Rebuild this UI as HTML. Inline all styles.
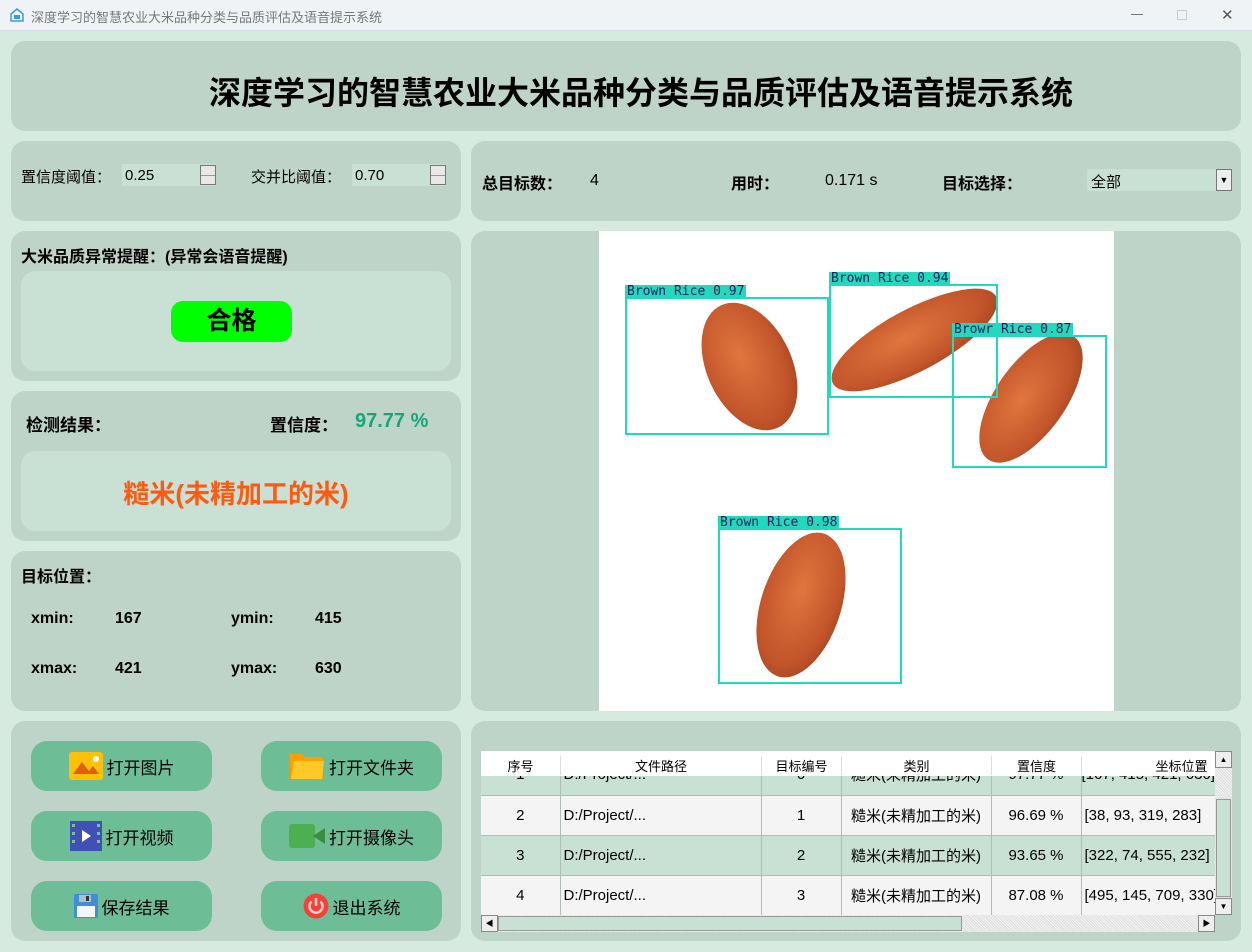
<!DOCTYPE html>
<html><head><meta charset="utf-8"><style>
*{box-sizing:border-box;margin:0;padding:0}
body{width:1252px;height:952px;background:#d6eadf;font-family:"Liberation Sans","Noto Sans CJK SC",sans-serif;position:relative;overflow:hidden;color:#000}
.a{position:absolute}
.p{position:absolute;background:#bfd4c8;border-radius:14px}
.in{position:absolute;background:#c9e0d4;border-radius:14px}
.b{font-weight:bold}
.btn{position:absolute;width:181px;height:50px;background:#6dbd96;border-radius:16px;display:flex;align-items:center;justify-content:center;font-size:17px;gap:4px}
.spin{position:absolute;background:#c9e0d4;height:22px;font-size:15px;padding:3px 0 0 3px}
.arr{position:absolute;right:0;top:1px;width:16px;height:20px;border:1px solid #777;background:#e8e8e8}
.arr:after{content:"";position:absolute;left:0;right:0;top:9px;border-top:1px solid #999}
table{border-collapse:collapse;font-size:15px}
td{border-right:1px solid #aac0b4;border-bottom:1px solid #aac0b4;height:40px;text-align:center;white-space:nowrap;overflow:hidden}
.box{position:absolute;border:2px solid #22d8bd}
.lab{position:absolute;background:#22d8bd;color:#1a2060;font-family:"DejaVu Sans Mono","Liberation Mono",monospace;font-size:13px;line-height:14px;padding:0 2px;white-space:nowrap}
.rice{position:absolute;background:radial-gradient(ellipse at 45% 40%,#e0763f,#c2552a 60%,#8e3518);border-radius:50%}
</style></head><body>
<div class="a" style="left:0;top:0;width:1252px;height:31px;background:#eff3f6;border-bottom:1px solid #dde"></div>
<svg class="a" style="left:9px;top:7px" width="16" height="16" viewBox="0 0 16 16"><path d="M2 7 L8 2 L14 7 V14 H2 Z" fill="none" stroke="#3a9be0" stroke-width="1.5"/><rect x="5" y="8" width="6" height="4" fill="#3a9be0"/></svg>
<div class="a" style="left:31px;top:7px;font-size:13px;color:#777">深度学习的智慧农业大米品种分类与品质评估及语音提示系统</div>
<div class="a" style="left:1131px;top:14px;width:12px;border-top:1px solid #777"></div>
<div class="a" style="left:1177px;top:10px;width:10px;height:10px;border:1px solid #ccc"></div>
<div class="a" style="left:1221px;top:6px;font-size:15px;color:#555">✕</div>

<div class="p" style="left:11px;top:41px;width:1230px;height:90px"></div>
<div class="a b" style="left:0;width:1282px;top:68px;text-align:center;font-size:32px">深度学习的智慧农业大米品种分类与品质评估及语音提示系统</div>

<div class="p" style="left:11px;top:141px;width:450px;height:80px"></div>
<div class="a" style="left:21px;top:166px;font-size:15px">置信度阈值：</div>
<div class="spin" style="left:122px;top:164px;width:94px">0.25<div class="arr"></div></div>
<div class="a" style="left:251px;top:166px;font-size:15px">交并比阈值：</div>
<div class="spin" style="left:352px;top:164px;width:94px">0.70<div class="arr"></div></div>

<div class="p" style="left:471px;top:141px;width:770px;height:80px"></div>
<div class="a b" style="left:482px;top:170px;font-size:16px">总目标数：</div>
<div class="a" style="left:590px;top:172px;font-size:16px">4</div>
<div class="a b" style="left:731px;top:170px;font-size:16px">用时：</div>
<div class="a" style="left:825px;top:172px;font-size:16px">0.171 s</div>
<div class="a b" style="left:942px;top:170px;font-size:16px">目标选择：</div>
<div class="a" style="left:1087px;top:169px;width:145px;height:22px;background:#c9e0d4;font-size:15px;padding:2px 4px">全部<div class="a" style="right:0;top:0;width:16px;height:22px;background:#eee;border:1px solid #777;font-size:9px;text-align:center;line-height:20px">▼</div></div>

<div class="p" style="left:11px;top:231px;width:450px;height:150px"></div>
<div class="a b" style="left:21px;top:243px;font-size:16px">大米品质异常提醒：(异常会语音提醒)</div>
<div class="in" style="left:21px;top:271px;width:430px;height:100px"></div>
<div class="a b" style="left:171px;top:301px;width:121px;height:41px;background:#00ff00;border-radius:12px;text-align:center;font-size:25px;line-height:41px">合格</div>

<div class="p" style="left:11px;top:391px;width:450px;height:150px"></div>
<div class="a b" style="left:26px;top:411px;font-size:17px">检测结果：</div>
<div class="a b" style="left:270px;top:411px;font-size:17px">置信度：</div>
<div class="a b" style="left:355px;top:410px;font-size:20px;color:#14a77c">97.77 %</div>
<div class="in" style="left:21px;top:451px;width:430px;height:80px"></div>
<div class="a b" style="left:21px;width:430px;top:474px;text-align:center;font-size:26px;color:#ff5a0f">糙米(未精加工的米)</div>

<div class="p" style="left:11px;top:551px;width:450px;height:160px"></div>
<div class="a b" style="left:21px;top:563px;font-size:16px">目标位置：</div>
<div class="a b" style="left:31px;top:610px;font-size:16px">xmin:</div><div class="a b" style="left:115px;top:610px;font-size:16px">167</div>
<div class="a b" style="left:231px;top:610px;font-size:16px">ymin:</div><div class="a b" style="left:315px;top:610px;font-size:16px">415</div>
<div class="a b" style="left:31px;top:660px;font-size:16px">xmax:</div><div class="a b" style="left:115px;top:660px;font-size:16px">421</div>
<div class="a b" style="left:231px;top:660px;font-size:16px">ymax:</div><div class="a b" style="left:315px;top:660px;font-size:16px">630</div>

<div class="p" style="left:11px;top:721px;width:450px;height:220px"></div>
<div class="btn" style="left:31px;top:741px"><svg width="34" height="28"><rect width="34" height="28" rx="3" fill="#ffc107"/><path d="M4 22 L13 10 L20 19 L24 14 L30 22Z" fill="#e0600a"/><circle cx="27" cy="7" r="3" fill="#fff"/></svg>打开图片</div>
<div class="btn" style="left:261px;top:741px"><svg width="36" height="28"><path d="M1 2 H13 L16 5 H34 V27 H1Z" fill="#ffa000"/><path d="M5 9 H35 L33 27 H2Z" fill="#ffca28"/></svg>打开文件夹</div>
<div class="btn" style="left:31px;top:811px"><svg width="32" height="30"><rect width="32" height="30" fill="#3f51b5"/><g fill="#7fbf9f"><rect x="2" y="3" width="3" height="3"/><rect x="2" y="11" width="3" height="3"/><rect x="2" y="19" width="3" height="3"/><rect x="27" y="3" width="3" height="3"/><rect x="27" y="11" width="3" height="3"/><rect x="27" y="19" width="3" height="3"/></g><path d="M12 9 L21 15 L12 21Z" fill="#fff"/></svg>打开视频</div>
<div class="btn" style="left:261px;top:811px"><svg width="36" height="24"><rect width="26" height="24" rx="3" fill="#4caf50"/><path d="M24 12 L36 4 V20Z" fill="#388e3c"/></svg>打开摄像头</div>
<div class="btn" style="left:31px;top:881px"><svg width="24" height="24"><rect width="24" height="24" rx="2" fill="#3d8fd6"/><rect x="5" y="1" width="12" height="7" fill="#b0bec5"/><rect x="12" y="2" width="3" height="5" fill="#333"/><rect x="3" y="12" width="18" height="11" fill="#f5f5f5"/></svg>保存结果</div>
<div class="btn" style="left:261px;top:881px"><svg width="26" height="26"><circle cx="13" cy="13" r="12.5" fill="#f44336"/><path d="M8.5 8.5 A6.5 6.5 0 1 0 17.5 8.5" fill="none" stroke="#ffcdd2" stroke-width="2.5"/><path d="M13 5 V13" stroke="#ffcdd2" stroke-width="2.5"/></svg>退出系统</div>

<div class="p" style="left:471px;top:231px;width:770px;height:480px"></div>
<div class="a" style="left:599px;top:231px;width:515px;height:480px;background:#fff;overflow:hidden">
 <div class="rice" style="left:108px;top:68px;width:85px;height:135px;transform:rotate(-25deg)"></div>
 <div class="rice" style="left:223px;top:78px;width:185px;height:62px;transform:rotate(-28deg)"></div>
 <div class="rice" style="left:357px;top:132px;width:150px;height:70px;transform:rotate(-55deg)"></div>
 <div class="rice" style="left:162px;top:299px;width:80px;height:150px;transform:rotate(18deg)"></div>
 <div class="box" style="left:26px;top:66px;width:204px;height:138px"></div><div class="lab" style="left:26px;top:54px">Brown Rice 0.97</div>
 <div class="box" style="left:230px;top:53px;width:169px;height:114px"></div><div class="lab" style="left:230px;top:41px">Brown Rice 0.94</div>
 <div class="box" style="left:353px;top:104px;width:155px;height:133px"></div><div class="lab" style="left:353px;top:92px">Browr Rice 0.87</div>
 <div class="box" style="left:119px;top:297px;width:184px;height:156px"></div><div class="lab" style="left:119px;top:285px">Brown Rice 0.98</div>
</div>

<div class="p" style="left:471px;top:721px;width:770px;height:220px"></div>
<div class="a" style="left:481px;top:751px;width:734px;height:164px;overflow:hidden">
<table style="position:absolute;top:4px;width:800px;table-layout:fixed">
<colgroup><col style="width:79px"><col style="width:201px"><col style="width:80px"><col style="width:150px"><col style="width:90px"><col style="width:200px"></colgroup>
<tr style="background:#c9e0d4"><td>1</td><td style="text-align:left;padding-left:3px">D:/Project/...</td><td>0</td><td>糙米(未精加工的米)</td><td>97.77 %</td><td style="text-align:left">[167, 415, 421, 630]</td></tr>
<tr style="background:#f4f4f4"><td>2</td><td style="text-align:left;padding-left:3px">D:/Project/...</td><td>1</td><td>糙米(未精加工的米)</td><td>96.69 %</td><td style="text-align:left;padding-left:3px">[38, 93, 319, 283]</td></tr>
<tr style="background:#c9e0d4"><td>3</td><td style="text-align:left;padding-left:3px">D:/Project/...</td><td>2</td><td>糙米(未精加工的米)</td><td>93.65 %</td><td style="text-align:left;padding-left:3px">[322, 74, 555, 232]</td></tr>
<tr style="background:#f4f4f4"><td>4</td><td style="text-align:left;padding-left:3px">D:/Project/...</td><td>3</td><td>糙米(未精加工的米)</td><td>87.08 %</td><td style="text-align:left;padding-left:3px">[495, 145, 709, 330]</td></tr>
</table>
<div class="a" style="left:0;top:0;width:734px;height:25px;background:#fff;font-size:13px">
<span class="a" style="left:0;width:79px;text-align:center;top:5px">序号</span>
<span class="a" style="left:79px;width:201px;text-align:center;top:5px;border-left:1px solid #ddd">文件路径</span>
<span class="a" style="left:280px;width:80px;text-align:center;top:5px;border-left:1px solid #ddd">目标编号</span>
<span class="a" style="left:360px;width:150px;text-align:center;top:5px;border-left:1px solid #ddd">类别</span>
<span class="a" style="left:510px;width:90px;text-align:center;top:5px;border-left:1px solid #ddd">置信度</span>
<span class="a" style="left:600px;width:200px;text-align:center;top:5px;border-left:1px solid #ddd">坐标位置</span>
</div></div>
<div class="a" style="left:1215px;top:751px;width:17px;height:164px;background:#e4e4e4"><div class="a" style="left:0;top:17px;width:17px;height:30px;background:repeating-linear-gradient(45deg,#ddd 0 1px,#f4f4f4 1px 2px)"></div><div class="a" style="left:1px;top:48px;width:15px;height:98px;background:#c9e0d4;border:1px solid #999"></div><div class="a" style="left:0;top:0;width:17px;height:17px;background:#eee;border:1px solid #888;font-size:8px;text-align:center;line-height:15px">▲</div><div class="a" style="left:0;bottom:0;width:17px;height:17px;background:#eee;border:1px solid #888;font-size:8px;text-align:center;line-height:15px">▼</div></div>
<div class="a" style="left:481px;top:915px;width:734px;height:17px;background:repeating-linear-gradient(45deg,#ddd 0 1px,#f4f4f4 1px 2px)"><div class="a" style="left:17px;top:1px;width:464px;height:15px;background:#c9e0d4;border:1px solid #999"></div><div class="a" style="left:0;top:0;width:17px;height:17px;background:#eee;border:1px solid #888;font-size:8px;text-align:center;line-height:15px">◀</div><div class="a" style="right:0;top:0;width:17px;height:17px;background:#eee;border:1px solid #888;font-size:8px;text-align:center;line-height:15px">▶</div></div>
</body></html>
